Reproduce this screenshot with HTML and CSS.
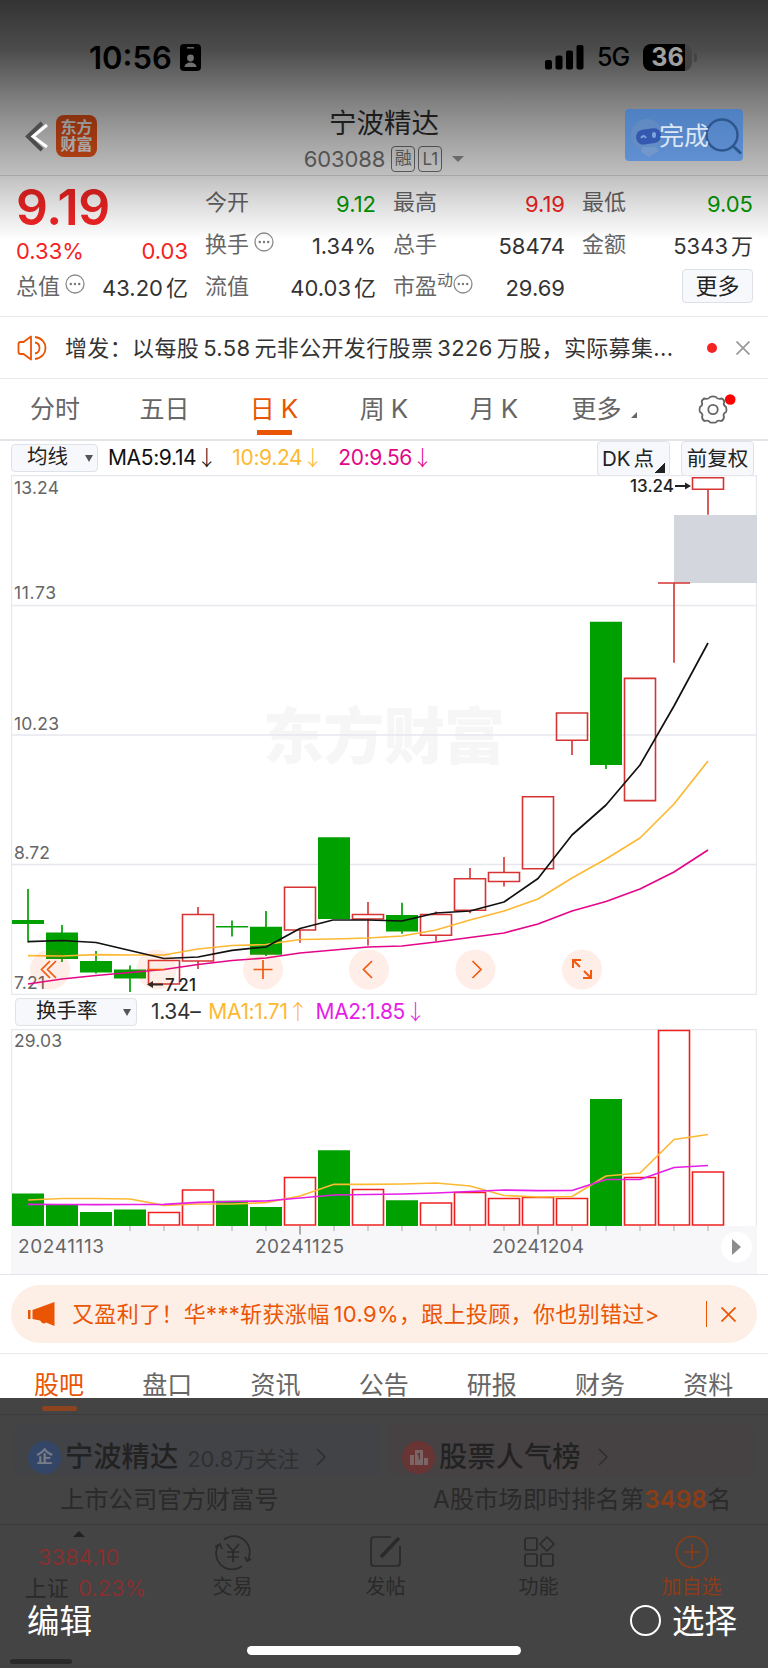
FILE: index.html
```
<!DOCTYPE html>
<html lang="zh-CN">
<head>
<meta charset="utf-8">
<title>宁波精达 603088</title>
<link rel="stylesheet" href="styles.css">
</head>
<body>
<div class="page">
  <div class="top-shade"></div>

  <div class="status">
    <span class="time">10:56</span>
    <svg class="id-badge" width="21" height="27" viewBox="0 0 21 27"><rect width="21" height="27" rx="4"/><path d="M7 3.800h7" stroke="#666" stroke-width="1.500"/><circle cx="10.500" cy="14" r="3.400" fill="#707070"/><path d="M4.500 23c.5-6 11.500-6 12 0z" fill="#707070"/></svg>
    <svg class="signal" width="39" height="25" viewBox="0 0 39 25"><rect y="15" width="7" height="9.500" rx="2"/><rect x="10.500" y="10.500" width="7" height="14" rx="2"/><rect x="21" y="5.500" width="7" height="19" rx="2"/><rect x="31.500" width="7" height="24.500" rx="2"/></svg>
    <span class="net">5G</span>
    <span class="battery"><b>36</b></span>
    <i class="battery-tip"></i>
  </div>

  <div class="nav">
    <svg class="back" width="24" height="32" viewBox="0 0 24 32" fill="none"><path d="M17 2L3 15.500 17 29" stroke="#4d4d4d" stroke-width="4"/><path d="M22 4L8 15.500 22 26" stroke="#fff" stroke-width="3"/></svg>
    <div class="logo">东方<br>财富</div>
    <div class="title">
      <h1>宁波精达</h1>
      <div class="code"><span>603088</span><em>融</em><em>L1</em><i></i></div>
    </div>
    <div class="done">
      <svg width="118" height="52" viewBox="0 0 118 52">
        <circle cx="22" cy="26" r="16" fill="#6d8fbd" opacity=".5"/>
        <path d="M17 38h14l3 4-10 6-8-5z" fill="#7197cb"/>
        <rect x="11" y="20" width="25" height="15" rx="7" fill="#3459b0" transform="rotate(-8 23 27)"/>
        <path d="M16 29q3-4 5 0" stroke="#7fa6dc" stroke-width="2" fill="none"/><ellipse cx="29" cy="26" rx="2" ry="3" fill="#7fa6dc"/>
        <circle cx="97" cy="26" r="15.500" fill="none" stroke="#2e568f" stroke-width="2.500"/><path d="M108 37l8 7.500" stroke="#2e568f" stroke-width="3"/>
      </svg>
      <span>完成</span>
    </div>
  </div>

  <div class="quote">
    <div class="col price">
      <strong>9.19</strong>
      <p class="red change"><span>0.33%</span><span>0.03</span></p>
      <p><label>总值</label><svg class="dots" viewBox="0 0 20 20"><use href="#dots"/></svg><span>43.20<u>亿</u></span></p>
    </div>
    <div class="col">
      <p><label>今开</label><span class="green">9.12</span></p>
      <p><label>换手</label><svg class="dots" viewBox="0 0 20 20"><use href="#dots"/></svg><span>1.34%</span></p>
      <p><label>流值</label><span>40.03<u>亿</u></span></p>
    </div>
    <div class="col">
      <p><label>最高</label><span class="red">9.19</span></p>
      <p><label>总手</label><span>58474</span></p>
      <p><label>市盈<sup>动</sup></label><svg class="dots pe" viewBox="0 0 20 20"><g id="dots"><circle cx="10" cy="10" r="9" fill="none" stroke="#8c8c8c" stroke-width="1.300"/><g fill="#777"><circle cx="5.800" cy="10" r="1.200"/><circle cx="10" cy="10" r="1.200"/><circle cx="14.200" cy="10" r="1.200"/></g></g></svg><span>29.69</span></p>
    </div>
    <div class="col">
      <p><label>最低</label><span class="green">9.05</span></p>
      <p><label>金额</label><span>5343<u>万</u></span></p>
      <p><button class="more">更多</button></p>
    </div>
  </div>

  <div class="news">
    <svg width="31" height="26" viewBox="0 0 31 26" fill="none" stroke="#ea5504" stroke-width="1.800"><path d="M14 1.500v23L6.500 19H3.500Q1.500 19 1.500 17V9Q1.500 7 3.500 7h3z" stroke-linejoin="round"/><path d="M18 7.500c6 1 6 10 0 11M18 2c14 1.500 14 20.500 0 22"/></svg>
    <span>增发：以每股<b>5.58</b>元非公开发行股票<b>3226</b>万股，实际募集...</span>
    <i></i>
    <svg class="x" width="14" height="14" viewBox="0 0 14 14" stroke="#999" stroke-width="1.700"><path d="M.5.5l13 13M13.500.5l-13 13"/></svg>
  </div>

  <div class="tabs">
    <span>分时</span><span>五日</span><span class="on">日<b>K</b></span><span>周<b>K</b></span><span>月<b>K</b></span><span class="drop">更多</span>
    <span class="gear"><svg width="44" height="32" viewBox="0 0 44 32" fill="none" stroke="#666" stroke-width="1.800"><path d="M9 5.500Q14 6.500 15 4Q18 2.800 21 4Q22 6.500 27 5.500Q30 7.500 29 10Q28 12 31 14Q32 17 31 19Q27.500 21 29 24Q28.500 27.500 26 28Q22.500 27 21 29.300Q18 29.800 15 29.300Q13.500 27 10 28Q7.500 27.500 7 24Q8.500 21 5 19Q4 17 5 14Q8 12 7 10Q6 7.500 9 5.500Z" stroke-linejoin="round"/><circle cx="18" cy="16.500" r="4.700"/><circle cx="35.200" cy="6.500" r="5.300" fill="#f00" stroke="none"/></svg></span>
  </div>

  <div class="ind">
    <div class="select avg"><span>均线</span><i></i></div>
    <span class="ma black">MA5:9.14<b>↓</b></span>
    <span class="ma yellow">10:9.24<b>↓</b></span>
    <span class="ma pink">20:9.56<b>↓</b></span>
    <div class="box dk">DK<u>点</u></div>
    <div class="box">前复权</div>
  </div>

  <svg class="chart" width="746" height="520" viewBox="11 475 746 520">
    <text class="mark" x="263" y="759" textLength="242">东方财富</text>
    <path class="grid" d="M11 475.500H757M11 605.500H757M11 735H757M11 864.500H757M11 994.500H757M11.500 475V995M756.500 475V995"/>
    <g class="lab"><text x="14" y="494" textLength="45">13.24</text><text x="14" y="599" textLength="42">11.73</text><text x="14" y="730" textLength="45">10.23</text><text x="14" y="859" textLength="36">8.72</text><text x="14" y="989" textLength="31">7.21</text></g>
    <rect x="674" y="515" width="83" height="68" fill="#d3d6dc"/>
    <!-- falling days -->
    <path fill="#00a000" d="M12 920h32v4H12zM46 932.500h32V959H46zM80 961h32v11.500H80zM114 969.500h32v9h-32zM216 926h32v1.500h-32zM250 926.700h32v28h-32zM318 837.300h32V919h-32zM386 915h32v16.500h-32zM590 621.700h32V765h-32z"/>
    <path stroke="#00a000" stroke-width="1.700" d="M28 889v53.500M62 925v37M96 951v22.500M130 965.500V992M232 920.500v16M266 911v45M402 902.700v31M606 764v5"/>
    <!-- rising days -->
    <g fill="none" stroke="#d63333" stroke-width="1.600">
      <path d="M148.500 960.500h31V984h-31zM182.500 914.500h31V961h-31zM284.500 887.300h31V930h-31zM352.500 914.500h31v4.500h-31zM420.500 914.500h31v20.800h-31zM454.500 878.700h31v31.600h-31zM488.500 872.500h31v9h-31zM522.500 796.800h31v71.900h-31zM556.500 713h31v27.300h-31zM624.500 678.400h31v122.200h-31zM692.500 477.700h31v11.600h-31z"/>
      <path d="M198 907v7.500m0 46.500v8M300 930v12.700M368 902v12.500m0 4.500v26.500M436 911.500v3m0 21v5.500M470 868v10.700m0 31.600v3M504 857v15.500m0 9v5M572 740.300V755M658 583h32M674 583v79.700M708 489.300v25.500"/>
    </g>
    <g class="line">
      <path stroke="#fdb933" d="M28 955.700L62 956 96 954.700 130 955 164 955 198 949 232 945.500 266 944.500 300 939.500 334 939 368 938 402 936 436 930 470 920 504 911 538 899 572 878 606 859 640 838 674 804 708 761"/>
      <path stroke="#e3068a" d="M28 984L62 979 96 975.500 130 972.500 164 969.500 198 964.500 232 960.500 266 958 300 953 334 950 368 947 402 946 436 942 470 937.500 504 933 538 924 572 911 606 901.500 640 889 674 872 708 850"/>
      <path stroke="#111" d="M28 941.700L62 940.500 96 942.500 130 950.500 164 958.500 198 957 232 950.300 266 947 300 928.500 333 920 368 920 402 921 436 913 470 911 504 902 538 878.500 572 835 606 805 640 765 674 706 708 643"/>
    </g>
    <g class="tip"><text x="630" y="492" textLength="44">13.24</text><text x="165" y="991" textLength="31">7.21</text><path d="M675 486h10M152 984.500h11" stroke="#222" stroke-width="1.800"/><path d="M691 486l-6-3.500v7zM147 984.500l6-3.500v7z"/></g>
    <g fill="#fd5d15" fill-opacity=".1"><circle cx="50" cy="969.500" r="20"/><circle cx="156.500" cy="969.500" r="20"/><circle cx="263" cy="969.500" r="20"/><circle cx="369" cy="969.500" r="20"/><circle cx="475.500" cy="969.500" r="20"/><circle cx="582" cy="969.500" r="20"/></g>
    <g fill="none" stroke="#f0590e" stroke-width="1.700"><path d="M50 961l-8.500 8.500L50 978M56 961l-8.500 8.500L56 978M147 969.500h18M253.500 969.500h19M263 960v19M372 961l-8.500 8.500 8.500 8.500M472.500 961l8.500 8.500-8.500 8.500"/><path stroke-width="2" d="M573 968v-8h8M573 960l7 7M591 970v8h-8M591 978l-7-7"/></g>
  </svg>

  <div class="ind vol-ind">
    <div class="select rate"><span>换手率</span><i></i></div>
    <span class="ma dark">1.34–</span>
    <span class="ma yellow">MA1:1.71<b>↑</b></span>
    <span class="ma purple">MA2:1.85<b>↓</b></span>
  </div>

  <svg class="chart" width="746" height="245" viewBox="11 1029 746 245">
    <rect x="11" y="1226" width="746" height="48" fill="#f7f7fa"/>
    <path class="grid" d="M11 1029.500H757M11.500 1029V1226M756.500 1029V1226"/>
    <g class="lab"><text x="14" y="1047" textLength="48">29.03</text></g>
    <path fill="#00a000" d="M12 1193.500h32v32.500H12zM46 1205h32v21H46zM80 1212h32v14H80zM114 1209.500h32v16.500h-32zM216 1200.700h32v25.300h-32zM250 1207h32v19h-32zM318 1150.300h32v75.700h-32zM386 1200.300h32v25.700h-32zM590 1099h32v127h-32z"/>
    <path fill="none" stroke="#f02020" stroke-width="1.600" d="M148.500 1212.500h31v12.500h-31zM182.500 1190h31v35h-31zM284.500 1177.500h31v47.500h-31zM352.500 1189.500h31v35.500h-31zM420.500 1203h31v22h-31zM454.500 1192.500h31v32.500h-31zM488.500 1198.500h31v26.500h-31zM522.500 1197.500h31v27.500h-31zM556.500 1198.500h31v26.500h-31zM624.500 1177.500h31v47.500h-31zM658.500 1030.500h31V1225h-31zM692.500 1172h31v53h-31z"/>
    <g class="line">
      <path stroke="#fdb933" d="M28 1200L62 1198.500 96 1198.500 130 1199 164 1205.300 198 1204 232 1204 266 1202.700 300 1196 334 1184.300 368 1184.300 402 1184 436 1183 470 1186 504 1195.500 538 1197 572 1196.500 606 1176 640 1173 674 1139.500 708 1134.500"/>
      <path stroke="#e61ee6" d="M28 1204.300L62 1204.500 96 1204.700 130 1204.500 164 1204.300 198 1202.300 232 1201.500 266 1201 300 1198 334 1195 368 1194.500 402 1194 436 1193 470 1191.500 504 1190 538 1190.700 572 1190.500 606 1179.500 640 1179.500 674 1167.500 708 1165.500"/>
    </g>
    <path stroke="#bbb" stroke-width="1.300" d="M130 1226v5m34-5v5m34-5v5m34-5v5m34-5v5m68-5v5m34-5v5m34-5v5m34-5v5m34-5v5m34-5v5m68-5v5m34-5v5m34-5v5m34-5v5m34-5v5"/>
    <path stroke="#999" stroke-width="1.600" d="M300 1226v8.500M538 1226v8.500"/>
    <g class="date"><text x="18" y="1253" textLength="86">20241113</text><text x="255" y="1253" textLength="89">20241125</text><text x="492" y="1253" textLength="92">20241204</text></g>
    <circle cx="736.500" cy="1247" r="15.500" fill="#fff"/><path d="M732 1239l9 8-9 8z" fill="#8c8c8c"/>
  </svg>

  <div class="banner-wrap">
    <div class="banner">
      <svg width="28" height="24" viewBox="0 0 28 24" fill="#ea5504"><path d="M0 8h2.500v9H0zM4.500 8L26.500 0v24L18 20.500Q15 23 12 18.500L4.500 17Z"/></svg>
      <span>又盈利了！华***斩获涨幅<b>10.9%</b>，跟上投顾，你也别错过&gt;</span>
      <i></i>
      <svg class="x" width="15" height="15" viewBox="0 0 15 15" stroke="#ea5504" stroke-width="1.700"><path d="M.5.5l14 14M14.500.5l-14 14"/></svg>
    </div>
  </div>

  <div class="sections">
    <span class="on">股吧</span><span>盘口</span><span>资讯</span><span>公告</span><span>研报</span><span>财务</span><span>资料</span>
  </div>

  <div class="footer">
    <div class="active-line"><i></i></div>
    <div class="cards">
      <div class="card blue">
        <div class="head"><i class="ico">企</i><b>宁波精达</b><small>20.8万关注</small><svg width="10" height="18" viewBox="0 0 10 18"><path d="M1 1l8 8-8 8"/></svg></div>
        <p>上市公司官方财富号</p>
      </div>
      <div class="card rose">
        <div class="head"><i class="ico"><svg width="20" height="18" viewBox="0 0 20 18"><path d="M1 7h4v10H1zM6 2h8v15H6zM15 10h4v7h-4z" fill="#7b6666"/><path d="M8.500 6.500l1.800-1v6" stroke="#683434" stroke-width="1.500" fill="none"/></svg></i><b>股票人气榜</b><svg width="10" height="18" viewBox="0 0 10 18"><path d="M1 1l8 8-8 8"/></svg></div>
        <p>A股市场即时排名第<em>3498</em>名</p>
      </div>
    </div>
    <div class="tools">
      <div class="index"><i></i><span>3384.10</span><p>上证 <em>0.23%</em></p></div>
      <div class="tool"><svg width="40" height="36" viewBox="0 0 40 36"><path d="M11 5.500a16 16 0 0 1 24 20M29 32A16 16 0 0 1 5.500 11M2 13l5-3 2 5M32 23l2 4 4-2M14 10l6 7 6-7M20 17v11M14 18h12M14 23h12"/></svg><span>交易</span></div>
      <div class="tool"><svg width="40" height="36" viewBox="0 0 40 36"><path d="M25 3H8Q5 3 5 6v23q0 3 3 3h23q3 0 3-3V12"/><path d="M15 23L33 4" stroke-width="3.500"/></svg><span>发帖</span></div>
      <div class="tool"><svg width="40" height="36" viewBox="0 0 40 36"><rect x="6" y="4" width="12" height="12" rx="2"/><rect x="6" y="20" width="12" height="12" rx="2"/><rect x="22" y="20" width="12" height="12" rx="2"/><path d="M28 3l7 7-7 7-7-7z" stroke-linejoin="round"/></svg><span>功能</span></div>
      <div class="tool add"><svg width="40" height="36" viewBox="0 0 40 36"><circle cx="20" cy="18" r="15.500"/><path d="M20 10v16M12 18h16"/></svg><span>加自选</span></div>
    </div>
    <div class="edit"><span>编辑</span><span class="pick"><i></i>选择</span></div>
    <div class="home"></div>
    <div class="corner"></div>
  </div>
</div>
</body>
</html>
```
FILE: styles.css
```
* {
  box-sizing: border-box;
}

body {
  margin: 0;
  background: #fff;
  font-family: Inter, "Noto Sans CJK SC", sans-serif;
  font-size: 22px;
  color: #333;
}

h1, p {
  margin: 0;
  font-weight: normal;
}

b, i, em, u, strong {
  font-style: normal;
  text-decoration: none;
  font-weight: normal;
}

span, label, p {
  white-space: nowrap;
}

.page {
  position: relative;
  width: 768px;
  height: 1669px;
  overflow: hidden;
}

/* dark fade over the top of the page */
.top-shade {
  position: absolute;
  top: 0;
  left: 0;
  width: 100%;
  height: 240px;
  background: linear-gradient(rgba(0,0,0,.8) 0, rgba(0,0,0,.7) 50px, rgba(0,0,0,.5) 100px, rgba(0,0,0,.36) 140px, rgba(0,0,0,.25) 175px, rgba(0,0,0,.13) 205px, rgba(0,0,0,0) 240px);
  pointer-events: none;
}

.status {
  position: relative;
  z-index: 1;
  display: flex;
  align-items: center;
  height: 85px;
  padding: 29px 71px 0 89px;
  color: #000;
}

.time {
  font-size: 31px;
  font-weight: 600;
  width: 91px;
}

.signal {
  margin-left: auto;
}

.net {
  font-size: 25px;
  font-weight: 500;
  width: 46px;
  margin-left: 13px;
  letter-spacing: -1px;
}

.battery {
  width: 49px;
  height: 27px;
  border-radius: 8px;
  background: linear-gradient(90deg, #000 42px, #444 42px);
  color: #a0a0a0;
  text-align: center;
  line-height: 27px;
  font-size: 25px;
}

.battery b {
  font-weight: 700;
}

.battery-tip {
  width: 3px;
  height: 9px;
  margin-left: 2px;
  border-radius: 0 4px 4px 0;
  background: #444;
}

.nav {
  display: grid;
  grid-template-columns: 31px 190px 1fr 143px;
  height: 91px;
  padding-left: 25px;
  border-bottom: 1px solid #ddd;
}

.back {
  position: relative;
  z-index: 1;
  margin-top: 36px;
}

.logo {
  width: 41px;
  height: 42px;
  margin-top: 30px;
  padding-top: 4px;
  border-radius: 8px;
  background: #f9581a;
  color: #fff;
  font-size: 16px;
  line-height: 17px;
  font-weight: 700;
  text-align: center;
}

.title {
  display: flex;
  flex-direction: column;
  align-items: center;
  width: 168px;
  margin-left: 54px;
  padding-top: 19px;
}

.title h1 {
  font-size: 27.500px;
  line-height: 38px;
}

.code {
  display: flex;
  align-items: center;
  color: #777;
  line-height: 26px;
  margin-top: 4px;
}

.code span {
  margin-right: 6px;
  letter-spacing: -.1px;
}

.code em {
  width: 24px;
  height: 26px;
  margin-right: 3px;
  border: 1px solid #777;
  border-radius: 4px;
  font-size: 17px;
  line-height: 24px;
  text-align: center;
}

.code em:first-of-type {
  line-height: 22px;
}

.code i {
  border: 6px solid transparent;
  border-top-color: #999;
  margin: 6px 0 0 7px;
}

.done {
  position: relative;
  z-index: 2;
  width: 118px;
  height: 52px;
  margin-top: 24px;
  border-radius: 4px;
  background: linear-gradient(#4f80c1, #6090d1);
  color: #dce7f5;
  font-size: 25px;
}

.done svg {
  display: block;
}

.done span {
  position: absolute;
  left: 34px;
  top: 7px;
}

.quote {
  display: grid;
  grid-template-columns: 172px 171px 172px 171px;
  column-gap: 17px;
  height: 141px;
  padding: 7px 0 0 16px;
  border-bottom: 1px solid #e9e9ed;
}

.col p {
  display: flex;
  align-items: center;
  height: 42px;
  line-height: 30px;
}

.col p > span {
  margin-left: auto;
}

.col label {
  height: 34px;
  color: #666;
}

.col u {
  margin-left: 3px;
}

.price strong {
  display: block;
  height: 45px;
  font-size: 50px;
  line-height: 48px;
  font-weight: 600;
  color: #f42424;
  letter-spacing: -.3px;
}

.price p.change {
  height: 39px;
  padding-top: 7px;
  justify-content: space-between;
}

.price p.change > span {
  margin: 0;
}

.col .red {
  color: #f52222;
}

.col .green {
  color: #009c00;
}

.dots {
  width: 20px;
  height: 20px;
  margin: -9px 0 0 5px;
}

.dots.pe {
  margin-left: 0;
}

.col sup {
  font-size: 16px;
  vertical-align: 8px;
  line-height: 0;
}

.more {
  width: 71px;
  height: 34px;
  margin: -4px 0 0 auto;
  padding: 0;
  border: 1px solid #dcdfe6;
  border-radius: 4px;
  background: #f7f8fb;
  font: inherit;
  line-height: 30px;
  color: #222;
}

.news {
  display: flex;
  align-items: center;
  height: 62px;
  padding: 0 17px 0 17px;
  border-bottom: 1px solid #ebebef;
}

.news span {
  width: 612px;
  margin: -4px 0 0 17px;
  letter-spacing: .36px;
}

.news b {
  margin: 0 4px;
}

.news i {
  width: 10px;
  height: 10px;
  margin-left: 30px;
  border-radius: 50%;
  background: #f52222;
}

.news .x {
  margin-left: auto;
  margin-right: 1px;
}

.tabs {
  display: grid;
  grid-template-columns: 110px 109px 110px 110px 110px 110px 109px;
  height: 62px;
  border-bottom: 2px solid #e3e3e8;
  color: #666;
  font-size: 25px;
  line-height: 60px;
  text-align: center;
}

.tabs b {
  margin-left: 6px;
  font-size: 26px;
  line-height: 0;
}

.tabs .on {
  color: #ea5504;
  background: linear-gradient(#ea5504, #ea5504) 38px 51px / 35px 5px no-repeat;
}

.drop::after {
  content: "";
  display: inline-block;
  margin-left: 9px;
  border: 3px solid #666;
  border-top-color: transparent;
  border-left-color: transparent;
}

.gear svg {
  display: block;
  margin: 14px 0 0 36px;
}

.ind {
  display: flex;
  align-items: center;
  height: 34px;
  padding: 0 14px 0 11px;
}

.select {
  display: flex;
  align-items: center;
  height: 28px;
  padding-left: 15px;
  border: 1px solid #dfe2e8;
  border-radius: 4px;
  background: #f7f8fb;
  font-size: 20.500px;
  line-height: 28px;
  color: #222;
}

.select span {
  height: 30px;
}

.select i {
  margin: 0 4px 0 auto;
  border: 4px solid transparent;
  border-top: 7px solid #555;
  border-bottom: 0;
}

.avg {
  width: 87px;
  margin-right: 10px;
}

.rate {
  width: 122px;
  padding-left: 20px;
  margin-right: 14px;
}

.rate i {
  margin-right: 5px;
}

.vol-ind {
  padding-left: 15px;
}

.ma {
  margin-right: 16px;
  font-size: 21px;
  line-height: 30px;
  letter-spacing: -.35px;
}

.ma.dark {
  margin-right: 7px;
}

.ma b {
  display: inline-block;
  width: 20px;
  font-family: "Noto Sans CJK SC", sans-serif;
  font-weight: 300;
  line-height: 24px;
  text-align: center;
}

.vol-ind .ma {
  margin-right: 8px;
}

.black { color: #111; }
.dark { color: #333; }
.yellow { color: #fdb933; }
.pink { color: #e3068a; }
.purple { color: #e61ee6; }

.box {
  width: 73px;
  height: 35px;
  border: 1px solid #dfe2e8;
  border-radius: 4px;
  background: #f7f8fb;
  font-size: 20.500px;
  line-height: 33px;
  text-align: center;
  white-space: nowrap;
  color: #222;
}

.dk {
  margin: 0 11px 0 auto;
  text-align: left;
  padding-left: 4px;
  background: linear-gradient(135deg, transparent 50%, #222 50%) 57px 21px / 10px 10px no-repeat #f7f8fb;
}

.dk u {
  margin-left: 3px;
}

.chart {
  display: block;
  margin-left: 11px;
}

.grid {
  stroke: #e6e8ee;
  stroke-width: 1.300;
  fill: none;
}

.mark {
  font-size: 61px;
  font-weight: 900;
  fill: #f6f6f6;
}

.lab text {
  font-size: 17.500px;
  fill: #666;
}

.date text {
  font-size: 19px;
  fill: #666;
}

.tip {
  font-size: 17px;
  font-weight: 500;
  fill: #222;
}

.line {
  fill: none;
  stroke-width: 1.700;
  stroke-linejoin: round;
}

.banner-wrap {
  height: 80px;
  padding: 10px 11px 0;
  border-top: 1px solid #e3e4ea;
  border-bottom: 1px solid #ebebee;
}

.banner {
  display: flex;
  align-items: center;
  height: 58px;
  padding: 0 21px 0 17px;
  border-radius: 29px;
  background: #fdeee6;
  color: #ea5504;
}

.banner span {
  margin: -4px 0 0 16px;
  letter-spacing: .34px;
}

.banner b {
  margin-left: 4px;
}

.banner i {
  width: 1px;
  height: 26px;
  margin-left: auto;
  margin-right: 14px;
  background: #ea5504;
}

.sections {
  display: grid;
  grid-template-columns: repeat(7, 108.200px);
  height: 44px;
  padding-left: 5px;
  overflow: hidden;
  font-size: 25px;
  line-height: 62px;
  text-align: center;
  color: #666;
}

.sections .on {
  color: #ea5504;
}

.footer {
  height: 270px;
  background: #444;
  overflow: hidden;
}

.active-line {
  height: 17px;
  padding: 8px 0 0 42px;
  border-bottom: 1px solid #3c3c3e;
}

.active-line i {
  display: block;
  width: 35px;
  height: 5px;
  border-radius: 2px;
  background: #8c431f;
}

.cards {
  display: flex;
  gap: 8px;
  height: 110px;
  padding: 8px 14px 0;
  border-bottom: 1px solid #3a3a3d;
}

.card {
  width: 366px;
}

.head {
  display: flex;
  align-items: center;
  height: 52px;
  padding: 16px 0 0 14px;
  border-radius: 7px;
  background: #424347;
}

.head b {
  margin-left: 4px;
  color: #222;
  font-size: 28.300px;
  line-height: 36px;
  font-weight: 500;
}

.head small {
  margin: 0 17px 0 9px;
  font-size: 22px;
  color: #303030;
  white-space: nowrap;
}

.head svg {
  fill: none;
  stroke: #2d2d2d;
  stroke-width: 1.500;
}

.head > b + svg {
  margin-left: 17px;
}

.rose .head {
  background: #464244;
}

.ico {
  display: flex;
  align-items: center;
  justify-content: center;
  width: 33px;
  height: 33px;
  border-radius: 50%;
  background: #344668;
  color: #777c86;
  font-size: 17px;
  line-height: 30px;
  font-weight: 700;
}

.rose .ico {
  background: #683434;
}

.rose .ico svg {
  stroke: none;
}

.card p {
  margin-top: 6px;
  padding-left: 46px;
  font-size: 24.300px;
  line-height: 36px;
  color: #2a2a2a;
}

.rose p {
  padding-left: 45px;
}

.card em {
  color: #8c3d17;
  font-weight: 600;
}

.tools {
  display: flex;
  height: 75px;
  padding-left: 9px;
}

.index {
  width: 139px;
  margin-right: 8px;
  padding-top: 1px;
  text-align: center;
  color: #863030;
  font-size: 22px;
  line-height: 30px;
}

.index i {
  display: block;
  width: 0;
  margin: 5px auto 5px;
  border: 6px solid transparent;
  border-bottom-color: #222;
  border-top-width: 0;
}

.index span {
  display: block;
  height: 31px;
}

.index p {
  margin-left: 14px;
  color: #2a2a2a;
}

.index em {
  color: #863030;
  margin-left: 3px;
}

.tool {
  display: flex;
  flex-direction: column;
  align-items: center;
  width: 153px;
  padding-top: 9px;
  font-size: 20px;
  line-height: 34px;
  color: #2a2a2a;
}

.tool svg {
  fill: none;
  stroke: #2a2a2a;
  stroke-width: 1.700;
  flex: none;
}

.tool.add {
  color: #8c3d17;
}

.tool.add svg {
  stroke: #8c3d17;
}

.edit {
  display: flex;
  justify-content: space-between;
  height: 46px;
  padding: 0 31px 0 27px;
  color: #fff;
  font-size: 32.500px;
  line-height: 43px;
}

.pick {
  display: flex;
}

.pick i {
  width: 31px;
  height: 31px;
  margin: 5px 11px 0 0;
  border: 2px solid #fff;
  border-radius: 50%;
}

.home {
  width: 274px;
  height: 9px;
  margin-left: 247px;
  border-radius: 5px;
  background: #fff;
}

.corner {
  width: 62px;
  height: 5px;
  margin: 4px 0 0 10px;
  border-radius: 3px;
  background: #2a2a2a;
}
```
